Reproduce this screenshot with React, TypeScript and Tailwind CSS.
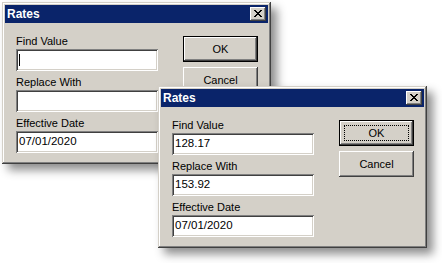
import React from "react";

const font = "font-['Liberation_Sans',Arial,sans-serif]";

function CloseButton() {
  return (
    <div className="flex h-[14px] w-[16px] items-center justify-center bg-[#d4d0c8] shadow-[inset_-1px_-1px_0_#404040,inset_1px_1px_0_#fff,inset_-2px_-2px_0_#808080,inset_2px_2px_0_#d4d0c8]">
      <svg width="8" height="7" viewBox="0 0 8 7" className="-mt-px">
        <path
          d="M0 0h2v1h1v1h2v-1h1v-1h2v1h-1v1h-1v1h-1v1h1v1h1v1h1v1h-2v-1h-1v-1h-2v1h-1v1h-2v-1h1v-1h1v-1h1v-1h-1v-1h-1v-1h-1z"
          fill="#000"
        />
      </svg>
    </div>
  );
}

function Field({
  label,
  value,
  cursor,
}: {
  label: string;
  value: string;
  cursor?: boolean;
}) {
  return (
    <div className="flex flex-col">
      <span className="h-[13px] text-[11px] leading-[13px] text-black">
        {label}
      </span>
      <div className="mt-px flex h-[22px] w-[142px] items-center bg-white pl-[3px] text-[11.5px] text-black shadow-[inset_1px_1px_0_#808080,inset_-1px_-1px_0_#fff,inset_2px_2px_0_#404040,inset_-2px_-2px_0_#d4d0c8]">
        {cursor && <span className="h-[12px] w-px bg-black" />}
        {value}
      </div>
    </div>
  );
}

function Button({
  label,
  isDefault,
  focused,
}: {
  label: string;
  isDefault?: boolean;
  focused?: boolean;
}) {
  const inner = (
    <div className="flex h-full w-full items-center justify-center bg-[#d4d0c8] shadow-[inset_-1px_-1px_0_#404040,inset_1px_1px_0_#fff,inset_-2px_-2px_0_#808080,inset_2px_2px_0_#d4d0c8]">
      <div
        className={`flex h-[calc(100%-8px)] w-[calc(100%-8px)] items-center justify-center text-[11px] text-black ${
          focused ? "border border-dotted border-black" : ""
        }`}
      >
        {label}
      </div>
    </div>
  );
  return (
    <div
      className={`h-[26px] w-[75px] ${isDefault ? "border border-black" : ""}`}
    >
      {inner}
    </div>
  );
}

function RatesDialog({
  className,
  find,
  replace,
  date,
  cursor,
  focused,
}: {
  className: string;
  find: string;
  replace: string;
  date: string;
  cursor?: boolean;
  focused?: boolean;
}) {
  return (
    <div
      className={`absolute flex h-[162px] w-[269px] flex-col bg-[#d4d0c8] p-[3px] shadow-[inset_-1px_-1px_0_#404040,inset_1px_1px_0_#d4d0c8,inset_-2px_-2px_0_#808080,inset_2px_2px_0_#fff,6px_6px_9px_rgba(0,0,0,0.45)] ${className}`}
    >
      <div className="flex h-[18px] items-center justify-between bg-[#0a246a] pl-[2px] pr-[2px]">
        <span className="text-[12px] font-bold leading-[18px] text-white">
          Rates
        </span>
        <CloseButton />
      </div>
      <div className="flex flex-1 justify-between pl-[11px] pr-[10px]">
        <div className="flex flex-col gap-[5px] pt-[12px]">
          <Field label="Find Value" value={find} cursor={cursor} />
          <Field label="Replace With" value={replace} />
          <Field label="Effective Date" value={date} />
        </div>
        <div className="flex flex-col gap-[5px] pt-[13px]">
          <Button label="OK" isDefault focused={focused} />
          <Button label="Cancel" />
        </div>
      </div>
    </div>
  );
}

export default function App() {
  return (
    <div className={`relative h-[263px] w-[442px] overflow-hidden bg-white ${font}`}>
      <RatesDialog
        className="left-[2px] top-[2px]"
        find=""
        replace=""
        date="07/01/2020"
        cursor
      />
      <RatesDialog
        className="left-[158px] top-[86px]"
        find="128.17"
        replace="153.92"
        date="07/01/2020"
        focused
      />
    </div>
  );
}
